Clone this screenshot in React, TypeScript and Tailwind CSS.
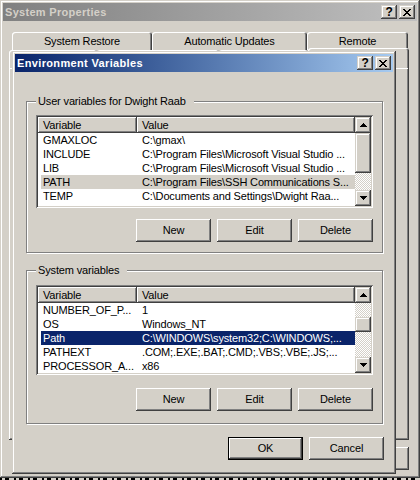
import React from 'react';

const raised = 'shadow-[inset_-1px_-1px_#404040,inset_1px_1px_#fff,inset_-2px_-2px_#808080]';
const bevel = 'shadow-[inset_-1px_-1px_#404040,inset_1px_1px_#d4d0c8,inset_-2px_-2px_#808080,inset_2px_2px_#fff]';
const sunken = 'shadow-[inset_1px_1px_#808080,inset_-1px_-1px_#fff,inset_2px_2px_#404040,inset_-2px_-2px_#d4d0c8]';
const checker = 'bg-[image:repeating-conic-gradient(#fff_0_25%,#d4d0c8_0_50%)] bg-[length:2px_2px]';
const etched = 'border border-[#808080] shadow-[1px_1px_0_#fff,inset_1px_1px_0_#fff]';
const tab = 'flex items-center justify-center bg-[#d4d0c8] rounded-t-[3px] shadow-[inset_1px_1px_#fff,inset_-1px_0_#404040,inset_-2px_0_#808080]';

type Row = [string, string];

const userVars: Row[] = [
  ['GMAXLOC', 'C:\\gmax\\'],
  ['INCLUDE', 'C:\\Program Files\\Microsoft Visual Studio ...'],
  ['LIB', 'C:\\Program Files\\Microsoft Visual Studio ...'],
  ['PATH', 'C:\\Program Files\\SSH Communications S...'],
  ['TEMP', 'C:\\Documents and Settings\\Dwight Raa...'],
];

const systemVars: Row[] = [
  ['NUMBER_OF_P...', '1'],
  ['OS', 'Windows_NT'],
  ['Path', 'C:\\WINDOWS\\system32;C:\\WINDOWS;...'],
  ['PATHEXT', '.COM;.EXE;.BAT;.CMD;.VBS;.VBE;.JS;...'],
  ['PROCESSOR_A...', 'x86'],
];

const XGlyph = () => (
  <svg width="8" height="7" viewBox="0 0 8 7" shapeRendering="crispEdges">
    <path
      fill="#000"
      d="M0 0h2v1H0z M6 0h2v1H6z M1 1h2v1H1z M5 1h2v1H5z M2 2h4v1H2z M3 3h2v1H3z M2 4h4v1H2z M1 5h2v1H1z M5 5h2v1H5z M0 6h2v1H0z M6 6h2v1H6z"
    />
  </svg>
);

const Arrow = ({ down }: { down?: boolean }) => (
  <svg width="7" height="4" viewBox="0 0 7 4" shapeRendering="crispEdges">
    <path
      fill="#000"
      d={down ? 'M0 0h7v1H0z M1 1h5v1H1z M2 2h3v1H2z M3 3h1v1H3z' : 'M3 0h1v1H3z M2 1h3v1H2z M1 2h5v1H1z M0 3h7v1H0z'}
    />
  </svg>
);

const CaptionButtons = () => (
  <div className="flex gap-[2px]">
    <div className={`w-[16px] h-[14px] pb-[1px] bg-[#d4d0c8] ${bevel} flex items-center justify-center font-bold text-[12px] leading-none text-black`}>
      ?
    </div>
    <div className={`w-[16px] h-[14px] bg-[#d4d0c8] ${bevel} flex items-center justify-center`}>
      <XGlyph />
    </div>
  </div>
);

const Btn = ({ children, def }: { children: React.ReactNode; def?: boolean }) => (
  <button
    className={`w-[75px] h-[23px] flex items-center justify-center bg-[#d4d0c8] ${def ? 'border border-black' : ''} ${raised}`}
  >
    {children}
  </button>
);

const ScrollBtn = ({ down }: { down?: boolean }) => (
  <div className={`h-[16px] shrink-0 bg-[#d4d0c8] ${bevel} flex items-center justify-center`}>
    <Arrow down={down} />
  </div>
);

const ListView = ({
  rows,
  sel,
  focus,
  size,
  before,
  thumb,
}: {
  rows: Row[];
  sel: number;
  focus?: boolean;
  size: string;
  before: string;
  thumb: string;
}) => (
  <div className={`${size} w-full min-w-0 bg-white p-[2px] flex ${sunken}`}>
    <div className="flex-1 min-w-0 overflow-hidden flex flex-col">
      <div className="flex h-[16px] shrink-0 bg-[#d4d0c8]">
        <div className={`w-[99px] pl-[5px] flex items-center ${raised}`}>Variable</div>
        <div className={`flex-1 pl-[5px] flex items-center ${raised}`}>Value</div>
      </div>
      {rows.map((r, i) => (
        <div key={i} className="flex h-[14px] shrink-0 pl-[3px] leading-[14px]">
          <div
            className={`flex flex-1 min-w-0 ${
              i === sel ? (focus ? 'bg-[#0a246a] text-white' : 'bg-[#d4d0c8]') : ''
            }`}
          >
            <div className="w-[96px] shrink-0 pl-[2px] whitespace-nowrap overflow-hidden">{r[0]}</div>
            <div className="flex-1 min-w-0 pl-[5px] whitespace-nowrap overflow-hidden">{r[1]}</div>
          </div>
        </div>
      ))}
    </div>
    <div className="w-[16px] shrink-0 flex flex-col">
      <ScrollBtn />
      <div className={`${before} shrink-0 ${checker}`} />
      <div className={`${thumb} shrink-0 bg-[#d4d0c8] ${bevel}`} />
      <div className={`flex-1 ${checker}`} />
      <ScrollBtn down />
    </div>
  </div>
);

// background window; the front tab row and its page sit behind the dialog
const SystemProperties = () => (
  <div className={`h-[478px] p-[3px] flex flex-col ${bevel}`}>
    <div className="h-[18px] shrink-0 flex items-center justify-between px-[2px] bg-linear-to-r from-[#808080] to-[#c0c0c0]">
      <span className="font-bold tracking-[0.3px] text-[#d4d0c8]">System Properties</span>
      <CaptionButtons />
    </div>
    <div className="mt-[11px] ml-[9px] flex h-[18px] shrink-0">
      <div className={`w-[140px] h-[18px] ${tab}`}>System Restore</div>
      <div className={`w-[155px] h-[18px] ${tab}`}>Automatic Updates</div>
      <div className={`w-[101px] h-[18px] ${tab}`}>Remote</div>
    </div>
    <div className="-mt-[2px] ml-[6px] flex items-end h-[20px] shrink-0">
      <div className={`w-[88px] h-[18px] ${tab}`} />
      <div className={`w-[122px] h-[18px] ${tab}`} />
      <div className={`w-[89px] h-[18px] ${tab}`} />
      <div className={`w-[101px] h-[20px] ${tab}`} />
    </div>
    <div className={`ml-[6px] w-[400px] h-[372px] shrink-0 ${raised}`} />
    <div className="mt-[7px] mr-[8px] flex justify-end gap-[6px]">
      <Btn>OK</Btn>
      <Btn>Cancel</Btn>
      <Btn>Apply</Btn>
    </div>
  </div>
);

const EnvironmentVariables = () => (
  <div className={`absolute left-[12px] top-[51px] w-[384px] h-[423px] p-[3px] bg-[#d4d0c8] flex flex-col items-start ${bevel}`}>
    <div className="h-[18px] w-full shrink-0 flex items-center justify-between px-[2px] bg-linear-to-r from-[#0a246a] to-[#a6caf0]">
      <span className="font-bold tracking-[0.35px] text-white">Environment Variables</span>
      <CaptionButtons />
    </div>

    <fieldset className={`w-[357px] min-w-0 mt-[23px] ml-[11px] px-[9px] pt-[7px] pb-[10px] ${etched}`}>
      <legend className="px-[2px] pr-[8px] leading-[13px] bg-[#d4d0c8]">User variables for Dwight Raab</legend>
      <ListView rows={userVars} sel={3} size="h-[93px]" before="h-0" thumb="h-[40px]" />
      <div className="mt-[11px] flex justify-end gap-[6px]">
        <Btn>New</Btn>
        <Btn>Edit</Btn>
        <Btn>Delete</Btn>
      </div>
    </fieldset>

    <fieldset className={`w-[357px] min-w-0 mt-[11px] ml-[11px] px-[9px] pt-[8px] pb-[12px] ${etched}`}>
      <legend className="px-[2px] pr-[8px] leading-[13px] bg-[#d4d0c8]">System variables</legend>
      <ListView rows={systemVars} sel={2} focus size="h-[90px]" before="h-[14px]" thumb="h-[15px]" />
      <div className="mt-[13px] flex justify-end gap-[6px]">
        <Btn>New</Btn>
        <Btn>Edit</Btn>
        <Btn>Delete</Btn>
      </div>
    </fieldset>

    <div className="mt-[13px] self-end mr-[9px] flex justify-end gap-[6px]">
      <Btn def>OK</Btn>
      <Btn>Cancel</Btn>
    </div>
  </div>
);

export default function App() {
  return (
    <div className="relative w-[420px] h-[480px] overflow-hidden bg-[#d4d0c8] font-['Liberation_Sans',Arial,sans-serif] text-[11px] leading-[13px] tracking-[-0.15px] text-black">
      <SystemProperties />
      <div className="h-[2px] bg-[image:repeating-linear-gradient(90deg,#000_0_2px,#d4d0c8_2px_5px,#000_5px_9px,#d4d0c8_9px_14px)]" />
      <EnvironmentVariables />
    </div>
  );
}
